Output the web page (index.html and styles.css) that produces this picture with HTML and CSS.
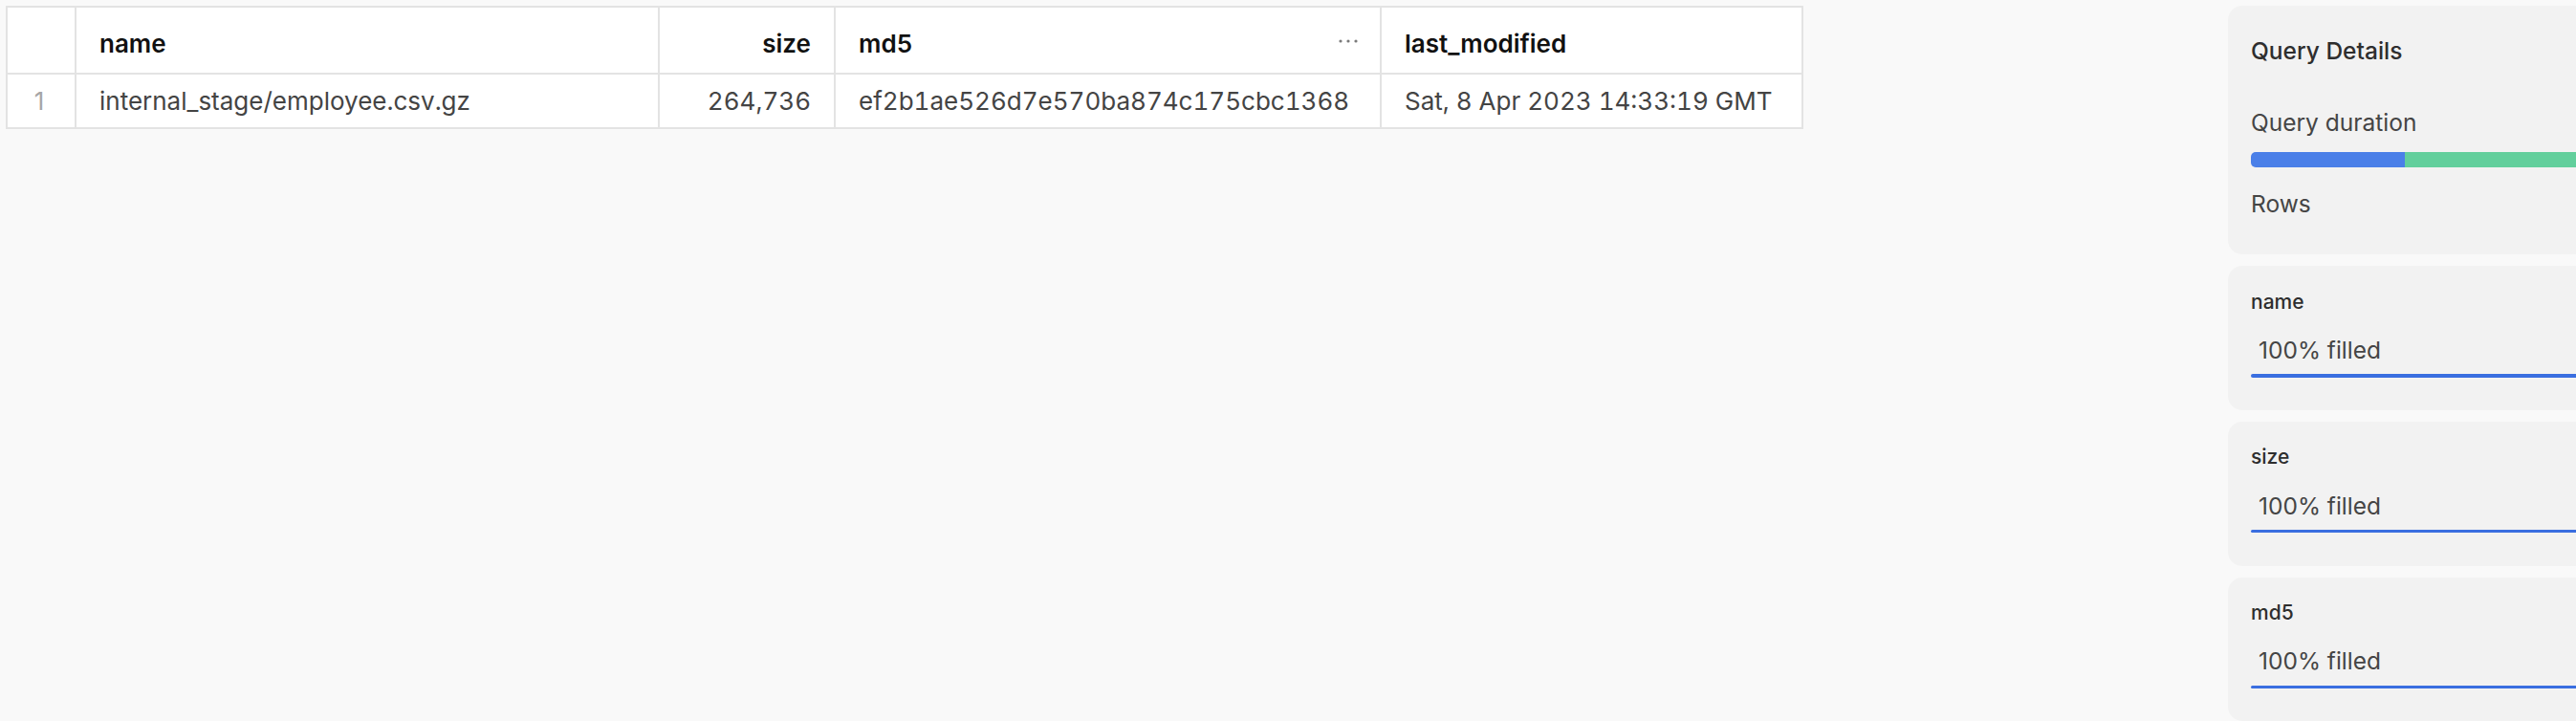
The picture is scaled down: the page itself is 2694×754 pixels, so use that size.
FILE: index.html
```html
<!DOCTYPE html>
<html lang="en">
<head>
<meta charset="utf-8">
<title>Stage files</title>
<link rel="stylesheet" href="styles.css">
</head>
<body>
<div class="page">
  <main class="results">
    <div class="grid">
      <div class="cell head rownum"></div>
      <div class="cell head">name</div>
      <div class="cell head right">size</div>
      <div class="cell head menu-cell"><span>md5</span>
        <svg class="dots" width="20" height="4" viewBox="0 0 20 4"><circle cx="2" cy="2" r="1.6"/><circle cx="10" cy="2" r="1.6"/><circle cx="18" cy="2" r="1.6"/></svg>
      </div>
      <div class="cell head">last_modified</div>

      <div class="cell rownum">1</div>
      <div class="cell">internal_stage/employee.csv.gz</div>
      <div class="cell right">264,736</div>
      <div class="cell">ef2b1ae526d7e570ba874c175cbc1368</div>
      <div class="cell">Sat, 8 Apr 2023 14:33:19 GMT</div>
    </div>
  </main>
  <aside class="sidebar">
    <section class="card details">
      <h2 class="card-title">Query Details</h2>
      <div class="metric">Query duration</div>
      <div class="duration-bar"><div class="seg seg-compile"></div><div class="seg seg-exec"></div></div>
      <div class="metric rows">Rows</div>
    </section>
    <section class="card column-card">
      <h3 class="col-name">name</h3>
      <div class="fill-label">100% filled</div>
      <div class="fill-line"></div>
    </section>
    <section class="card column-card">
      <h3 class="col-name">size</h3>
      <div class="fill-label">100% filled</div>
      <div class="fill-line"></div>
    </section>
    <section class="card column-card">
      <h3 class="col-name">md5</h3>
      <div class="fill-label">100% filled</div>
      <div class="fill-line"></div>
    </section>
  </aside>
</div>
</body>
</html>
```

FILE: styles.css
```css
html, body {
  margin: 0;
  padding: 0;
  background: #f9f9f9;
  overflow: hidden;
}
body {
  font-family: Inter, "Noto Sans", "Liberation Sans", sans-serif;
  width: 2694px;
  height: 754px;
}
.page {
  display: flex;
  align-items: flex-start;
  width: 2694px;
  height: 754px;
  overflow: hidden;
}
.results {
  flex: 0 0 2330px;
  box-sizing: border-box;
  padding: 6px;
}
.grid {
  display: grid;
  grid-template-columns: 72px 610px 184px 571px 441px;
  grid-template-rows: 70px 57px;
  width: max-content;
  border-left: 2px solid #e3e3e3;
  border-top: 2px solid #e3e3e3;
  background: #fff;
}
.cell {
  box-sizing: border-box;
  border-right: 2px solid #e3e3e3;
  border-bottom: 2px solid #e3e3e3;
  padding: 0 24px;
  display: flex;
  align-items: center;
  font-size: 26px;
  font-variant-numeric: tabular-nums;
  color: #444;
  white-space: nowrap;
}
.cell.head {
  font-weight: 600;
  color: #111;
  padding-top: 6px;
}
.cell.right {
  justify-content: flex-end;
}
.cell.rownum {
  justify-content: center;
  padding: 0 4px 0 0;
  color: #a6a6a6;
  font-variant-numeric: normal;
}
.menu-cell {
  justify-content: space-between;
  padding-right: 23px;
}
.dots {
  fill: #7a7a7a;
  margin-top: -4px;
}
.sidebar {
  flex: 0 0 620px;
  display: flex;
  flex-direction: column;
  gap: 12.25px;
  padding-top: 6px;
}
.card {
  background: #f2f2f2;
  border-radius: 15px;
  padding: 0 24px;
  box-sizing: border-box;
}
.details {
  height: 260px;
  padding-top: 30px;
}
.card-title {
  margin: 0;
  font-size: 24.5px;
  line-height: 35px;
  font-weight: 500;
  color: #2e2e2e;
}
.metric {
  font-size: 24.5px;
  line-height: 35px;
  color: #454545;
  margin-top: 39.6px;
}
.duration-bar {
  display: flex;
  height: 16px;
  margin-top: 13.4px;
  border-radius: 5px;
  overflow: hidden;
}
.seg-compile {
  flex: 0 0 161px;
  background: #4a7fe8;
}
.seg-exec {
  flex: 1;
  background: #62cf9c;
}
.metric.rows {
  margin-top: 20.6px;
}
.column-card {
  height: 150.5px;
  padding-top: 22.4px;
}
.col-name {
  margin: 0;
  font-size: 21px;
  line-height: 30px;
  font-weight: 500;
  color: #2e2e2e;
}
.fill-label {
  font-size: 24.5px;
  line-height: 35px;
  color: #454545;
  margin-top: 18.2px;
  padding-left: 8px;
}
.fill-line {
  height: 3.5px;
  margin-top: 7.4px;
  background: #3a6ee0;
  border-radius: 2px;
}
```
